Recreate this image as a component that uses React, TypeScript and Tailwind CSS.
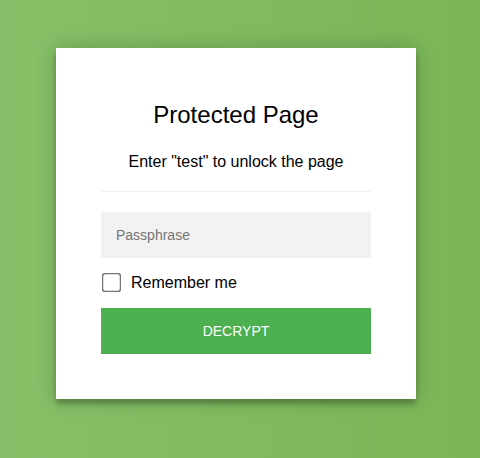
import { useState } from "react";

// ── Protected page form ────────────────────────────────────────────────────
export default function App() {
  const [pass, setPass] = useState("");
  const [remember, setRemember] = useState(false);

  return (
    <div
      className="min-h-[458px] w-full bg-gradient-to-r from-[#86c068] to-[#7ab657] pt-[48px] pr-[8px]"
      style={{ fontFamily: '"Liberation Sans", Arial, sans-serif' }}
    >
      <div className="mx-auto w-[360px] bg-white px-[45px] pt-[53px] pb-[45px] text-center shadow-[0_0_20px_rgba(0,0,0,0.2),0_5px_5px_rgba(0,0,0,0.24)]">
        {/* Judul */}
        <p className="text-[24px] leading-[28px] text-black">Protected Page</p>
        <p className="mt-[24px] text-[16px] leading-[18px] text-black">
          Enter "test" to unlock the page
        </p>

        <hr className="mt-[20px] mb-[20px] border-0 border-t border-[#eeeeee]" />

        <form onSubmit={(e) => e.preventDefault()}>
          <input
            type="password"
            autoFocus
            value={pass}
            onChange={(e) => setPass(e.target.value)}
            placeholder="Passphrase"
            className="mb-[15px] block h-[46px] w-full border-0 bg-[#f2f2f2] px-[15px] text-[14px] text-black caret-black outline-none placeholder:text-[#757575]"
          />

          <label className="mb-[16px] flex h-[19px] items-center text-[16px] text-black">
            <input
              type="checkbox"
              checked={remember}
              onChange={(e) => setRemember(e.target.checked)}
              className="my-0 mr-[13px] ml-[4px] h-[13px] w-[13px] scale-150"
            />
            Remember me
          </label>

          <button
            type="submit"
            className="block h-[46px] w-full cursor-pointer border-0 bg-[#4caf50] text-[14px] uppercase text-white outline-none"
          >
            Decrypt
          </button>
        </form>
      </div>
    </div>
  );
}
